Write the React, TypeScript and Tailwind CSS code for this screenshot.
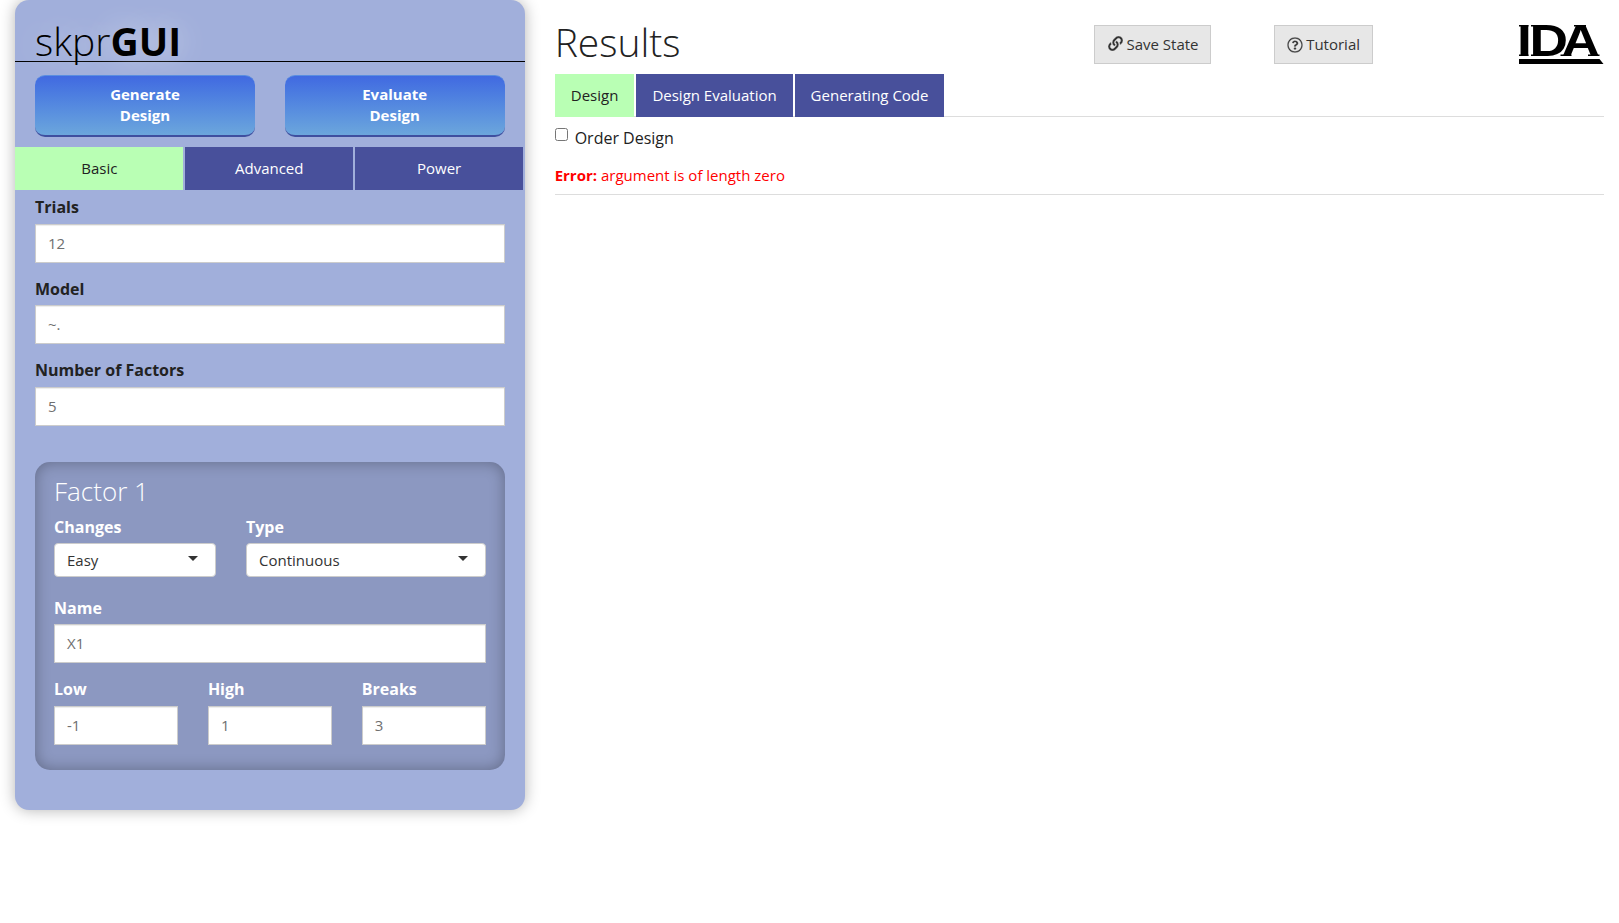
import type { ReactNode } from "react";
import { FaLink, FaRegQuestionCircle } from "react-icons/fa";

function Field({ label, value, light = false }: { label: string; value: string; light?: boolean }) {
  return (
    <div className="flex h-[81.5px] flex-col">
      <span
        className={
          light
            ? "h-[27.5px] text-[16px] leading-[22px] font-bold text-white"
            : "h-[27.5px] text-[16px] leading-[22px] font-bold text-[#222]"
        }
      >
        {label}
      </span>
      <div className="h-[39px] border border-[#ccc] bg-white px-3 text-[15px] leading-[37px] text-[#6f6f6f] shadow-[inset_0_1px_1px_rgba(0,0,0,0.075)]">
        {value}
      </div>
    </div>
  );
}

function Select({ label, value }: { label: string; value: string }) {
  return (
    <div className="flex h-[81px] flex-col">
      <span className="h-[27px] text-[16px] leading-[22px] font-bold text-white">{label}</span>
      <div className="flex h-[34px] items-center justify-between rounded-[4px] border border-[#ccc] bg-white pr-[17px] pl-3 text-[15px] leading-[20px] text-[#333]">
        <span>{value}</span>
        <svg width="10" height="5" viewBox="0 0 10 5" className="mb-[2px]">
          <path d="M0 0h10L5 5z" fill="#333" />
        </svg>
      </div>
    </div>
  );
}

function ActionButton({ children }: { children: ReactNode }) {
  return (
    <div className="flex h-[62px] w-[220px] items-start justify-center rounded-[10px] border-t border-b-2 border-t-[#5a8ee0] border-b-[#3f4f9f] bg-linear-to-b from-[#4169e1] to-[#6ca6dc] pt-[8px] text-center text-[15px] leading-[21px] font-bold text-white">
      {children}
    </div>
  );
}

function Logo() {
  return (
    <svg width="89" height="58" viewBox="-4 -14 89 58" className="-mt-[14px] ml-auto shrink-0">
      <text
        x="-1.6 8.7 35.5"
        y="31"
        transform="scale(1.2 1)"
        fontFamily="Liberation Sans"
        fontWeight="700"
        fontSize="44.5"
      >
        IDA
      </text>
      <path d="M0 0h9.500v1.500H0zM0 29.500h9.500V31H0zM12 0h8v1.500h-8zM12 29.500h8V31h-8zM55 0h12v1.500H55zM41.500 29.500h11V31h-11zM69 29.500h11.500V31H69z" />
      <path d="M0 34h80.500l4 5H0z" />
    </svg>
  );
}

export default function App() {
  return (
    <div className="flex h-[923px] w-[1619px] bg-white pl-[15px] font-['Open_Sans',sans-serif] text-[15px] text-[#222]">
      <aside className="h-[810px] w-[509.67px] shrink-0 rounded-[14px] bg-[#a1afdb] shadow-[0_0_15px_rgba(0,0,0,0.3)]">
        <h1 className="h-[62px] border-b border-black pt-[14px] pl-5 text-[39px] leading-[53px] font-light text-black [text-shadow:0_0_30px_rgba(255,255,255,0.6)]">
          skpr<b className="font-bold">GUI</b>
        </h1>
        <div className="flex justify-between px-5 pt-[13px]">
          <ActionButton>
            Generate
            <br />
            Design
          </ActionButton>
          <ActionButton>
            Evaluate
            <br />
            Design
          </ActionButton>
        </div>
        <nav className="mt-[10px] flex gap-[2px] pr-[2px] text-center leading-[43px]">
          <div className="h-[43px] flex-1 bg-[#b9ffb4] pl-[0.800px] text-[#222]">Basic</div>
          <div className="h-[43px] flex-1 bg-[#48509b] pl-[0.800px] text-white">Advanced</div>
          <div className="h-[43px] flex-1 bg-[#48509b] pl-[0.800px] text-white">Power</div>
        </nav>
        <div className="px-5 pt-[6.200px]">
          <Field label="Trials" value="12" />
          <Field label="Model" value="~." />
          <Field label="Number of Factors" value="5" />
          <section className="mt-[21px] h-[308px] rounded-[15px] bg-[#8c98c1] px-[19px] pt-[11px] shadow-[inset_0_0_15px_rgba(0,0,0,0.3)]">
            <h2 className="h-[43.200px] text-[26px] leading-[36px] font-light text-white">Factor 1</h2>
            <div className="grid grid-cols-[161.500px_1fr] gap-[30.500px]">
              <Select label="Changes" value="Easy" />
              <Select label="Type" value="Continuous" />
            </div>
            <Field light label="Name" value="X1" />
            <div className="grid grid-cols-3 gap-[30px]">
              <Field light label="Low" value="-1" />
              <Field light label="High" value="1" />
              <Field light label="Breaks" value="3" />
            </div>
          </section>
        </div>
      </aside>
      <main className="ml-[30px] w-[1049.33px]">
        <header className="flex h-[74px] items-start pt-[15px]">
          <h1 className="w-[539px] text-[39px] leading-[53px] font-light text-[#222]">Results</h1>
          <div className="mt-[10px] flex h-[39px] flex-1">
            <div className="flex w-[117px] items-center border border-[#ccc] bg-[#e7e7e7] pl-[13px] text-[#333]">
              <FaLink stroke="#e7e7e7" strokeWidth="14" className="mr-[3.800px] mb-[2px] h-[15px] w-[15px]" />
              Save State
            </div>
            <div className="ml-[63px] flex w-[99px] items-center border border-[#ccc] bg-[#e7e7e7] pl-[12px] text-[#333]">
              <FaRegQuestionCircle stroke="#e7e7e7" strokeWidth="10" className="mr-[3.500px] h-[16px] w-[16px]" />
              Tutorial
            </div>
            <Logo />
          </div>
        </header>
        <nav className="flex h-[43px] gap-[2px] text-center leading-[43px] shadow-[inset_0_-1px_0_#ddd]">
          <div className="w-[79px] bg-[#b9ffb4] pl-[0.800px]">Design</div>
          <div className="w-[157px] bg-[#48509b] pl-[0.800px] text-white">Design Evaluation</div>
          <div className="w-[149px] bg-[#48509b] pl-[0.800px] text-white">Generating Code</div>
        </nav>
        <label className="mt-[10px] flex h-[22px] text-[16px] leading-[22px]">
          <input type="checkbox" className="mt-[1px] mr-[7px] h-[13px] w-[13px]" />
          Order Design
        </label>
        <p className="mt-[16px] h-[30px] border-b border-[#ddd] leading-[21px] text-[#ff0000]">
          <b className="font-bold">Error:</b> argument is of length zero
        </p>
      </main>
    </div>
  );
}
